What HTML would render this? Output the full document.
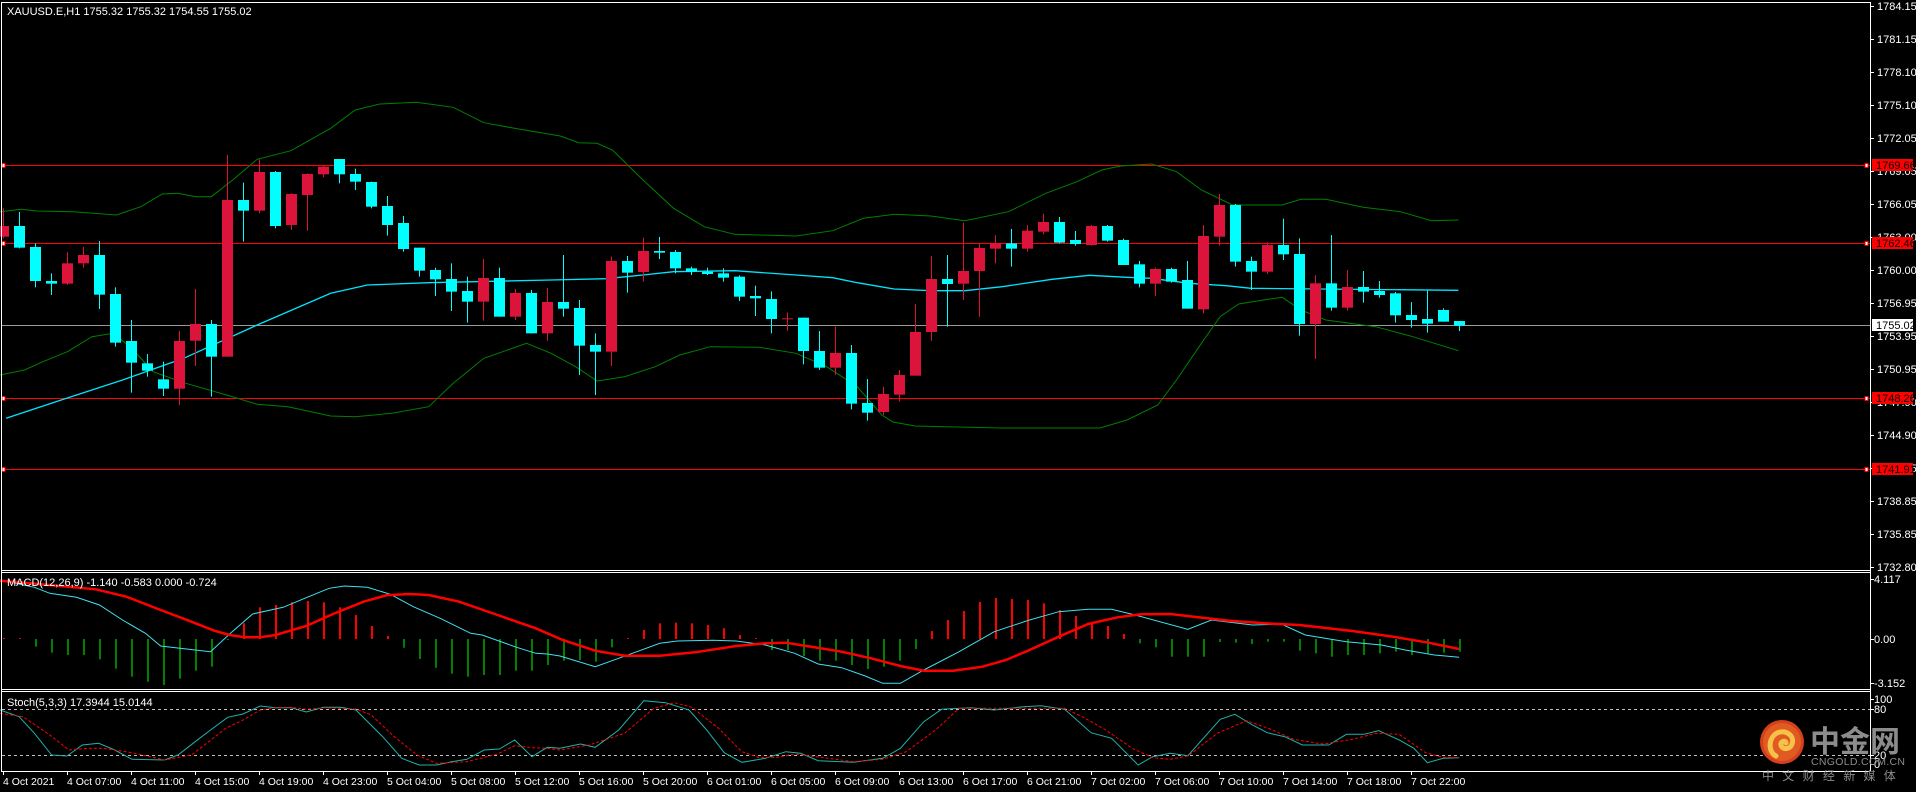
<!DOCTYPE html>
<html><head><meta charset="utf-8">
<style>
html,body{margin:0;padding:0;background:#000;width:1916px;height:792px;overflow:hidden}
svg{display:block}
text{font-family:"Liberation Sans",sans-serif;font-size:11px;fill:#fff}
</style></head><body>
<svg id="s" width="1916" height="792" xmlns="http://www.w3.org/2000/svg">
<rect width="1916" height="792" fill="#000"/>
<g id="g"></g>
<!-- frame -->
<g stroke="#fff" stroke-width="1" fill="none" shape-rendering="crispEdges">
<line x1="1.5" y1="2" x2="1.5" y2="771"/>
<line x1="1" y1="2.5" x2="1870" y2="2.5"/>
<line x1="1870.5" y1="2" x2="1870.5" y2="771"/>
<line x1="1" y1="570.5" x2="1870" y2="570.5"/>
<line x1="1" y1="572.5" x2="1870" y2="572.5"/>
<line x1="1" y1="689.5" x2="1870" y2="689.5"/>
<line x1="1" y1="691.5" x2="1870" y2="691.5"/>
<line x1="1" y1="771.5" x2="1870" y2="771.5"/>
</g>
<text x="7" y="15">XAUUSD.E,H1  1755.32 1755.32 1754.55 1755.02</text>
<text x="7" y="586">MACD(12,26,9) -1.140 -0.583 0.000 -0.724</text>
<text x="7" y="706">Stoch(5,3,3) 17.3944 15.0144</text>
<!-- logo -->
<g>
<circle cx="1782" cy="742" r="22" fill="#d4401c"/>
<circle cx="1782" cy="742" r="19" fill="#e05a22"/>
<path d="M1776 756 C1768 752 1768 738 1777 733 C1786 729 1795 736 1792 744 C1790 750 1782 750 1781 745 C1780 741 1786 740 1786 743" stroke="#f7c24a" stroke-width="5" fill="none" stroke-linecap="round"/>
<text x="1810" y="752" style="font-family:'Noto Sans CJK SC',sans-serif;font-size:30px;font-weight:bold;fill:#8c8c8c">中金网</text>
<text x="1811" y="765" style="font-size:10.5px;fill:#8c8c8c;letter-spacing:0.3px">CNGOLD.COM.CN</text>
<text x="1762" y="780" style="font-family:'Noto Sans CJK SC',sans-serif;font-size:12px;fill:#8c8c8c;letter-spacing:8.3px">中文财经新媒体</text>
</g>
</svg>
<script>
var NS="http://www.w3.org/2000/svg",G=document.getElementById('g');
function el(t,a,txt){var e=document.createElementNS(NS,t);for(var k in a)e.setAttribute(k,a[k]);if(txt!=null)e.textContent=txt;G.appendChild(e);return e;}
function poly(pts,c,w,dash){el('polyline',{points:pts.map(function(p){return p[0].toFixed(1)+','+p[1].toFixed(1)}).join(' '),fill:'none',stroke:c,'stroke-width':w||1,'stroke-dasharray':dash||'none'});}
function z5(a){return a.map(function(p){return[p[0]/1.633,p[1]/3]});}
function z6(a){return a.map(function(p){return[p[0]/1.607+940,p[1]/3]});}
function z2(a){return a.map(function(p){return[p[0]/2.613,p[1]/3+560]});}
function z7(a){return a.map(function(p){return[p[0]/1.704+560,p[1]/3+570]});}
// horizontal lines
[[165,'#ff0000'],[243,'#ff0000'],[398,'#ff0000'],[469,'#ff0000']].forEach(function(l){
 el('line',{x1:2,y1:l[0]+.5,x2:1870,y2:l[0]+.5,stroke:l[1],'shape-rendering':'crispEdges'});
 el('rect',{x:2,y:l[0]-1.5,width:3,height:4,fill:'#fff',stroke:'#f00','stroke-width':1});
 el('rect',{x:1865,y:l[0]-1.5,width:3,height:4,fill:'#fff',stroke:'#f00','stroke-width':1});
});
el('line',{x1:2,y1:325.5,x2:1870,y2:325.5,stroke:'#9a9a9a','shape-rendering':'crispEdges'});
// bollinger
var mid=z5([[10,1255],[100,1200],[200,1140],[300,1075],[420,975],[540,880],[600,855],[700,848],[900,840],[990,836],[1050,825],[1100,815],[1200,812],[1300,825],[1360,833],[1400,848],[1460,867],[1520,872]]).concat(z6([[40,872],[100,860],[180,838],[240,826],[300,832],[340,835],[400,850],[460,857],[500,865],[833,871]]));
var up=z5([[0,635],[35,628],[60,633],[120,635],[190,645],[230,620],[265,582],[290,580],[320,590],[345,590],[380,540],[420,478],[475,452],[540,385],[580,330],[620,312],[680,307],[740,322],[790,368],[840,385],[915,408],[945,428],[975,430],[1000,450],[1050,540],[1100,625],[1150,680],[1200,703],[1300,708],[1360,692],[1410,655],[1460,643],[1520,648]]).concat(z6([[40,662],[110,635],[170,580],[220,545],[260,510],[290,498],[340,492],[380,515],[420,570],[470,615],[550,615],[580,598],[620,598],[680,622],[740,635],[790,662],[833,660]]));
var lo=z5([[0,1125],[40,1110],[70,1085],[110,1055],[150,1010],[185,1000],[215,1045],[250,1115],[300,1148],[370,1185],[420,1213],[470,1220],[540,1248],[580,1250],[640,1240],[700,1220],[740,1150],[790,1075],[860,1030],[900,1060],[940,1100],[975,1143],[1020,1130],[1070,1100],[1110,1065],[1160,1040],[1240,1042],[1300,1060],[1350,1100],[1400,1160],[1440,1245]]).concat([[893,422],[915,426],[1000,428],[1100,428],[1127,420]]).concat(z6([[350,1215],[380,1140],[420,1030],[450,950],[480,912],[520,900],[550,892],[580,930],[620,960],[700,980],[760,1010],[833,1052]]));
poly(up,'#008000',1);poly(lo,'#008000',1);poly(mid,'#00e5ff',1.3);
// candles [bodyTop,bodyBot,wickTop,wickBot,red?]
var C=[[678,710,625,715,1],[678,743,636,745,0],[741,843,730,862,0],[843,851,820,885,0],[790,851,757,855,1],[765,790,741,803,1],[765,884,723,927,0],[882,1028,862,1040,0],[1023,1088,960,1178,0],[1090,1112,1062,1130,0],[1138,1166,1085,1188,0],[1023,1166,993,1215,1],[972,1022,867,1098,1],[972,1070,960,1190,0],[600,1070,465,1070,1],[600,632,548,725,0],[516,632,478,640,1],[516,678,513,685,0],[582,675,580,690,1],[522,585,520,692,1],[500,523,498,532,1],[477,523,477,550,0],[522,545,506,570,0],[546,620,545,625,0],[618,675,588,707,0],[669,747,648,755,0],[743,812,743,830,0],[810,838,803,888,0],[837,875,790,933,0],[873,905,830,968,0],[834,905,777,962,1],[834,950,803,950,0],[879,950,867,960,1],[879,1000,870,1000,0],[906,1000,864,1022,1],[906,926,765,950,0],[924,1037,900,1125,0],[1035,1055,1000,1185,0],[783,1055,770,1098,1],[783,818,768,878,0],[753,816,713,845,1],[753,758,711,777,0],[756,805,750,820,0],[805,815,800,825,0],[815,822,803,825,0],[820,833,805,845,0],[830,890,826,903,0],[888,895,857,948,0],[897,957,874,1000,0],[955,958,938,992,1],[953,1053,953,1093,0],[1053,1103,993,1110,0],[1059,1103,980,1125,1],[1059,1211,1035,1228,0],[1209,1238,1137,1262,0],[1182,1236,1160,1245,1],[1125,1184,1110,1205,1],[996,1127,912,1127,1],[837,996,768,1022,1],[837,852,765,980,0],
[813,851,668,900,1],[744,813,730,950,1],[730,746,706,790,1],[730,746,687,800,0],[692,746,675,755,1],[666,695,641,703,1],[666,728,651,730,0],[720,732,693,737,0],[678,735,675,737,1],[678,722,675,725,0],[720,795,716,795,0],[793,851,783,862,0],[807,851,803,888,1],[807,845,803,848,0],[840,926,783,926,0],[708,928,675,940,1],[615,710,582,737,1],[615,785,612,800,0],[783,815,770,870,0],[735,815,727,822,1],[735,763,656,780,0],[762,972,715,1007,0],[850,972,826,1077,1],[850,923,705,932,0],[861,923,810,932,1],[861,875,813,908,0],[873,885,843,893,0],[880,946,876,968,0],[945,960,906,983,0],[957,971,872,998,0],[930,965,925,965,0],[963,977,963,993,0]];
C.forEach(function(c,i){var x=3+16*i,col=c[4]?'#dc143c':'#00ffff';
 el('rect',{x:x,y:c[2]/3,width:1,height:Math.max(1,(c[3]-c[2])/3),fill:col});
 el('rect',{x:x-5,y:c[0]/3,width:11,height:Math.max(1,(c[1]-c[0])/3),fill:col});
});
// MACD histogram (offset px from zero line 639, positive=down green)
var H=[-1,-1,7.7,13.7,16,16,20.3,29.7,37.7,42.7,46,39.7,31.7,27.7,1,-15.7,-31.7,-34,-36.7,-38,-36.7,-31.7,-24,-13,-3,8.7,20,28.7,34.7,37.7,36,36,31.7,31.7,26,21.7,21,22.7,8.3,-1,-9,-15.7,-16.3,-15.7,-14,-10.7,-4,-1,11,11,17,21.7,21.7,26,30,27.7,21.7,10,-8,-19,-28,-37,-41,-40,-39,-35.7,-29,-23,-17.3,-13,-5,4.3,8.3,17.7,17.7,17.7,3,3.7,5,2.7,2.7,11.7,14.3,17.7,16,16,14.3,12.7,16,14.3,13.7,12.7];
H.forEach(function(h,i){var x=3+16*i;
 if(h>=0)el('rect',{x:x,y:639,width:2,height:Math.max(1,h),fill:'#008000'});
 else el('rect',{x:x,y:639+h,width:2,height:-h,fill:'#ff0000'});
});
var mr=z2([[0,62],[100,72],[250,88],[330,110],[420,150],[500,185],[560,212],[600,225],[640,232],[680,232],[720,225],[800,198],[870,162],[950,125],[1010,106],[1070,102],[1120,105],[1200,125],[1300,165],[1400,205],[1470,240]]).concat(z7([[60,242],[110,257],[170,257],[230,247],[300,228],[350,220],[385,218],[420,228],[480,245],[530,265],[580,288],[620,302],[670,302],[720,290],[760,270],[800,240],[850,200],[900,162],[950,142],[990,133],[1040,132],[1080,140],[1140,152],[1200,160],[1260,165],[1350,183],[1420,200],[1480,218],[1532,237]]));
var mc=z2([[0,60],[90,82],[130,100],[200,112],[260,135],[320,180],[380,220],[420,258],[470,265],[550,275],[600,222],[660,162],[740,142],[800,113],[860,85],[900,78],[960,82],[1020,103],[1080,140],[1150,175],[1230,220],[1260,225],[1350,262],[1400,280],[1430,282]]).concat(z7([[0,258],[60,290],[100,265],[170,220],[200,213],[260,211],[300,213],[350,225],[400,250],[440,282],[480,293],[520,318],[550,340],[580,340],[620,300],[680,245],[740,185],[800,150],[850,125],[900,118],[940,118],[980,135],[1070,178],[1110,150],[1180,165],[1230,163],[1270,195],[1340,215],[1400,225],[1440,240],[1490,255],[1532,262]]));
poly(mc,'#40e0f0',1);poly(mr,'#ff0000',2.5);
// Stoch
el('line',{x1:2,y1:709.5,x2:1870,y2:709.5,stroke:'#c0c0c0','stroke-dasharray':'3,3'});
el('line',{x1:2,y1:755.5,x2:1870,y2:755.5,stroke:'#c0c0c0','stroke-dasharray':'3,3'});
var sk=z2([[0,450],[50,470],[90,520],[135,585],[175,588],[215,555],[258,550],[300,570],[345,598],[430,600],[465,585],[510,545],[550,510],[595,472],[635,462],[680,438],[720,443],[760,443],[800,456],[845,442],[890,442],[930,450],[1000,530],[1050,595],[1095,615],[1140,615],[1180,605],[1220,598],[1265,570],[1305,567],[1345,540],[1390,590],[1430,562]]).concat(z7([[0,535],[35,522],[60,532],[100,480],[143,392],[180,398],[220,420],[250,480],[280,548],[310,577],[350,565],[385,545],[410,550],[440,572],[500,577],[550,565],[580,535],[620,455],[650,418],[700,413],[740,420],[790,410],[820,407],[860,418],[905,488],[940,505],[985,585],[1010,560],[1040,550],[1070,557],[1125,448],[1150,433],[1180,465],[1205,488],[1235,500],[1265,525],[1310,525],[1340,493],[1370,493],[1395,482],[1430,510],[1455,535],[1478,578],[1505,565],[1532,563]]));
var sd=z2([[0,460],[60,470],[130,525],[180,570],[230,565],[270,565],[345,578],[430,600],[500,585],[540,550],[590,505],[635,480],[680,450],[720,443],[760,442],[800,448],[850,443],[930,447],[970,465],[1030,530],[1090,585],[1140,610],[1220,605],[1300,582],[1345,557],[1390,563],[1430,565]]).concat(z7([[0,540],[50,525],[110,490],[160,415],[195,398],[225,412],[270,475],[310,545],[340,563],[370,562],[400,552],[450,563],[500,575],[550,568],[590,545],[640,480],[680,415],[720,415],[860,415],[890,440],[930,480],[975,535],[1010,563],[1040,568],[1070,558],[1120,490],[1170,452],[1210,477],[1250,508],[1300,522],[1350,508],[1390,490],[1430,493],[1475,548],[1505,562],[1532,563]]));
poly(sk,'#20b2aa',1);poly(sd,'#ff0000',1,'3,2');
// price axis
var P=['1784.15','1781.15','1778.10','1775.10','1772.05','1769.05','1766.05','1763.00','1760.00','1756.95','1753.95','1750.95','1747.90','1744.90','1741.85','1738.85','1735.85','1732.80'];
P.forEach(function(p,k){var y=6+33*k;el('line',{x1:1870,y1:y+.5,x2:1874,y2:y+.5,stroke:'#fff'});el('text',{x:1877,y:y+4},p);});
[[165,'1769.66'],[243,'1762.46'],[398,'1748.26'],[469,'1741.91']].forEach(function(l){el('rect',{x:1872,y:l[0]-6,width:41,height:12,fill:'#ff0000'});el('text',{x:1876,y:l[0]+4,style:'fill:#000'},l[1]);});
el('rect',{x:1872,y:319,width:41,height:12,fill:'#fff'});el('text',{x:1876,y:329,style:'fill:#000'},'1755.02');
[[579,'4.117'],[639,'0.00'],[683,'-3.152'],[699,'100'],[709,'80'],[755,'20'],[764,'0']].forEach(function(l){el('line',{x1:1870,y1:l[0]+.5,x2:1874,y2:l[0]+.5,stroke:'#fff'});el('text',{x:1874,y:l[0]+4},l[1]);});
// time axis
var T=['4 Oct 2021','4 Oct 07:00','4 Oct 11:00','4 Oct 15:00','4 Oct 19:00','4 Oct 23:00','5 Oct 04:00','5 Oct 08:00','5 Oct 12:00','5 Oct 16:00','5 Oct 20:00','6 Oct 01:00','6 Oct 05:00','6 Oct 09:00','6 Oct 13:00','6 Oct 17:00','6 Oct 21:00','7 Oct 02:00','7 Oct 06:00','7 Oct 10:00','7 Oct 14:00','7 Oct 18:00','7 Oct 22:00'];
T.forEach(function(t,k){var x=3+64*k;el('line',{x1:x+.5,y1:771,x2:x+.5,y2:775,stroke:'#fff'});el('text',{x:x,y:785,style:'font-size:10.5px'},t);});
</script>
</body></html>
